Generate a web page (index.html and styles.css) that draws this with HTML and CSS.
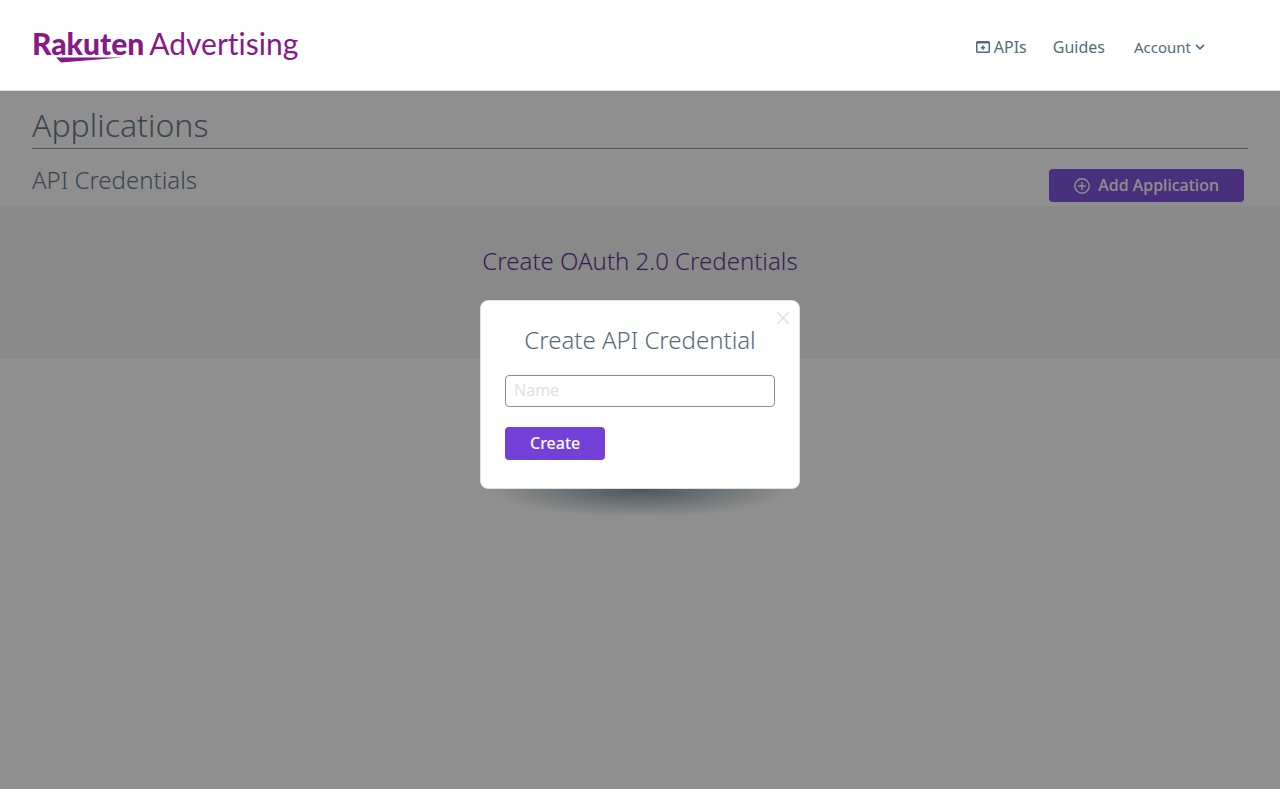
FILE: index.html
```html
<!DOCTYPE html>
<html lang="en">
<head>
<meta charset="utf-8">
<title>Rakuten Advertising - Applications</title>
<link rel="stylesheet" href="styles.css">
</head>
<body>
<header class="header">
  <a class="logo" href="#">
    <span class="logo-bold">Rakuten</span>
    <span class="logo-light">Advertising</span>
    <svg class="logo-swoosh" width="66" height="6" viewBox="0 0 66 6" aria-hidden="true"><path d="M0 0.5H66L5 5.5z" fill="#87188a"/></svg>
  </a>
  <nav class="nav">
    <a class="nav-link" href="#">
      <svg width="14" height="12" viewBox="0 0 14 12" aria-hidden="true"><path d="M1.5 0h11A1.5 1.5 0 0 1 14 1.5v9a1.5 1.5 0 0 1-1.5 1.5h-11A1.5 1.5 0 0 1 0 10.5v-9A1.5 1.5 0 0 1 1.5 0zM1.5 2.5v8h11v-8zM6.2 4.5h1.6v1.4h1.4v1.5H7.8v1.4H6.2V7.400H4.800V5.900h1.400z" fill="#556b78" fill-rule="evenodd"/></svg>
      <span>APIs</span>
    </a>
    <a class="nav-link" href="#">Guides</a>
    <button class="account" type="button">Account
      <svg width="10" height="6" viewBox="0 0 10 6" aria-hidden="true"><path d="M1 0.800l4 4 4-4" fill="none" stroke="#556b78" stroke-width="1.700"/></svg>
    </button>
  </nav>
</header>
<main class="main">
  <h1 class="page-title">Applications</h1>
  <div class="toolbar">
    <h2 class="section-title">API Credentials</h2>
    <button class="button button-add" type="button">
      <svg width="16" height="16" viewBox="0 0 16 16" aria-hidden="true"><path d="M8 4v8M4 8h8" stroke="#fff" stroke-width="1.500"/><circle cx="8" cy="8" r="7.200" fill="none" stroke="#fff" stroke-width="1.400"/></svg>
      <span>Add Application</span>
    </button>
  </div>
  <section class="band">
    <h2 class="band-title">Create OAuth 2.0 Credentials</h2>
  </section>
  <div class="overlay"></div>
</main>
<div class="modal-layer">
  <form class="modal" role="dialog" aria-labelledby="modal-title">
    <button class="close" type="button" aria-label="Close">
      <svg width="14" height="14" viewBox="0 0 14 14" aria-hidden="true"><path d="M1 1l12 12M13 1L1 13" stroke="#dbe1e6" stroke-width="1.500"/></svg>
    </button>
    <h2 class="modal-title" id="modal-title">Create API Credential</h2>
    <input class="field" type="text" placeholder="Name" aria-label="Name">
    <button class="button" type="submit">Create</button>
  </form>
</div>
</body>
</html>
```

FILE: styles.css
```css
* { box-sizing: border-box; }

body {
  margin: 0;
  min-height: 100vh;
  display: flex;
  flex-direction: column;
  font-family: "Noto Sans", sans-serif;
  font-size: 16px;
  line-height: 24px;
  color: #556b78;
}

h1, h2 { margin: 0; font-weight: 300; }

.header {
  display: flex;
  justify-content: space-between;
  align-items: center;
  padding: 20px 75px 24px 32px;
  min-height: 91px;
  border-bottom: 1px solid #dbe1e6;
}

.logo {
  position: relative;
  display: flex;
  align-items: baseline;
  gap: 5px;
  font-family: Lato, sans-serif;
  font-size: 30px;
  font-variant-ligatures: none;
  line-height: 40px;
  color: #87188a;
  text-decoration: none;
}
.logo-bold { font-weight: 900; }
.logo-swoosh { position: absolute; left: 24px; bottom: 0; }

.nav { display: flex; align-items: center; padding-top: 8px; }
.nav-link {
  display: flex;
  align-items: center;
  gap: 4px;
  margin-right: 26px;
  color: inherit;
  text-decoration: none;
}
.account {
  display: flex;
  align-items: center;
  gap: 4px;
  padding: 0 0 0 3px;
  border: 0;
  background: none;
  font: 15px/24px "Noto Sans", sans-serif;
  color: inherit;
}

.main { position: relative; flex: 1; }
.page-title {
  margin: 12px 32px 0;
  padding-bottom: 1px;
  border-bottom: 1px solid #7b929e;
  font-size: 32px;
  line-height: 44px;
}
.toolbar {
  display: flex;
  justify-content: space-between;
  align-items: flex-start;
  padding: 15px 36px 4px 32px;
}
.section-title { font-size: 24px; line-height: 32px; }

.button {
  height: 33px;
  padding: 0 25px 2px;
  border: 0;
  border-radius: 4px;
  background: #7340d8;
  color: #fff;
  font: 500 16px/24px "Noto Sans", sans-serif;
}
.button-add {
  display: flex;
  align-items: center;
  gap: 8px;
  margin-top: 5px;
}
.button-add svg { margin-top: 2px; }

.band { padding: 39px 32px 82px; background: #f3f3f3; text-align: center; }
.band-title { font-size: 24px; line-height: 32px; color: #4b1c8c; }

.overlay { position: absolute; inset: 0; background: rgba(31, 31, 31, 0.5); }

.modal-layer {
  position: fixed;
  inset: 0;
  display: flex;
  align-items: center;
  justify-content: center;
}
.modal {
  position: relative;
  width: 320px;
  padding: 23px 24px 28px;
  border: 1px solid #dbe1e6;
  border-radius: 8px;
  background: #fff;
}
.modal::after {
  content: "";
  position: absolute;
  top: calc(100% + 1px);
  left: 10px;
  right: 10px;
  height: 28px;
  background: radial-gradient(ellipse 50% 100% at 50% 0, #4a5559, rgba(74, 85, 89, 0));
}
.modal-title {
  margin-bottom: 19px;
  font-size: 24px;
  line-height: 32px;
  text-align: center;
}
.field {
  display: block;
  width: 100%;
  height: 32px;
  margin-bottom: 20px;
  padding: 0 8px 2px;
  border: 1px solid #7b929e;
  border-radius: 4px;
  background: #fff;
  font: 16px/24px "Noto Sans", sans-serif;
  color: #556b78;
}
.field::placeholder { color: #dbe1e6; opacity: 1; }
.close {
  position: absolute;
  top: 10px;
  right: 9px;
  display: flex;
  padding: 0;
  border: 0;
  background: none;
}
```
